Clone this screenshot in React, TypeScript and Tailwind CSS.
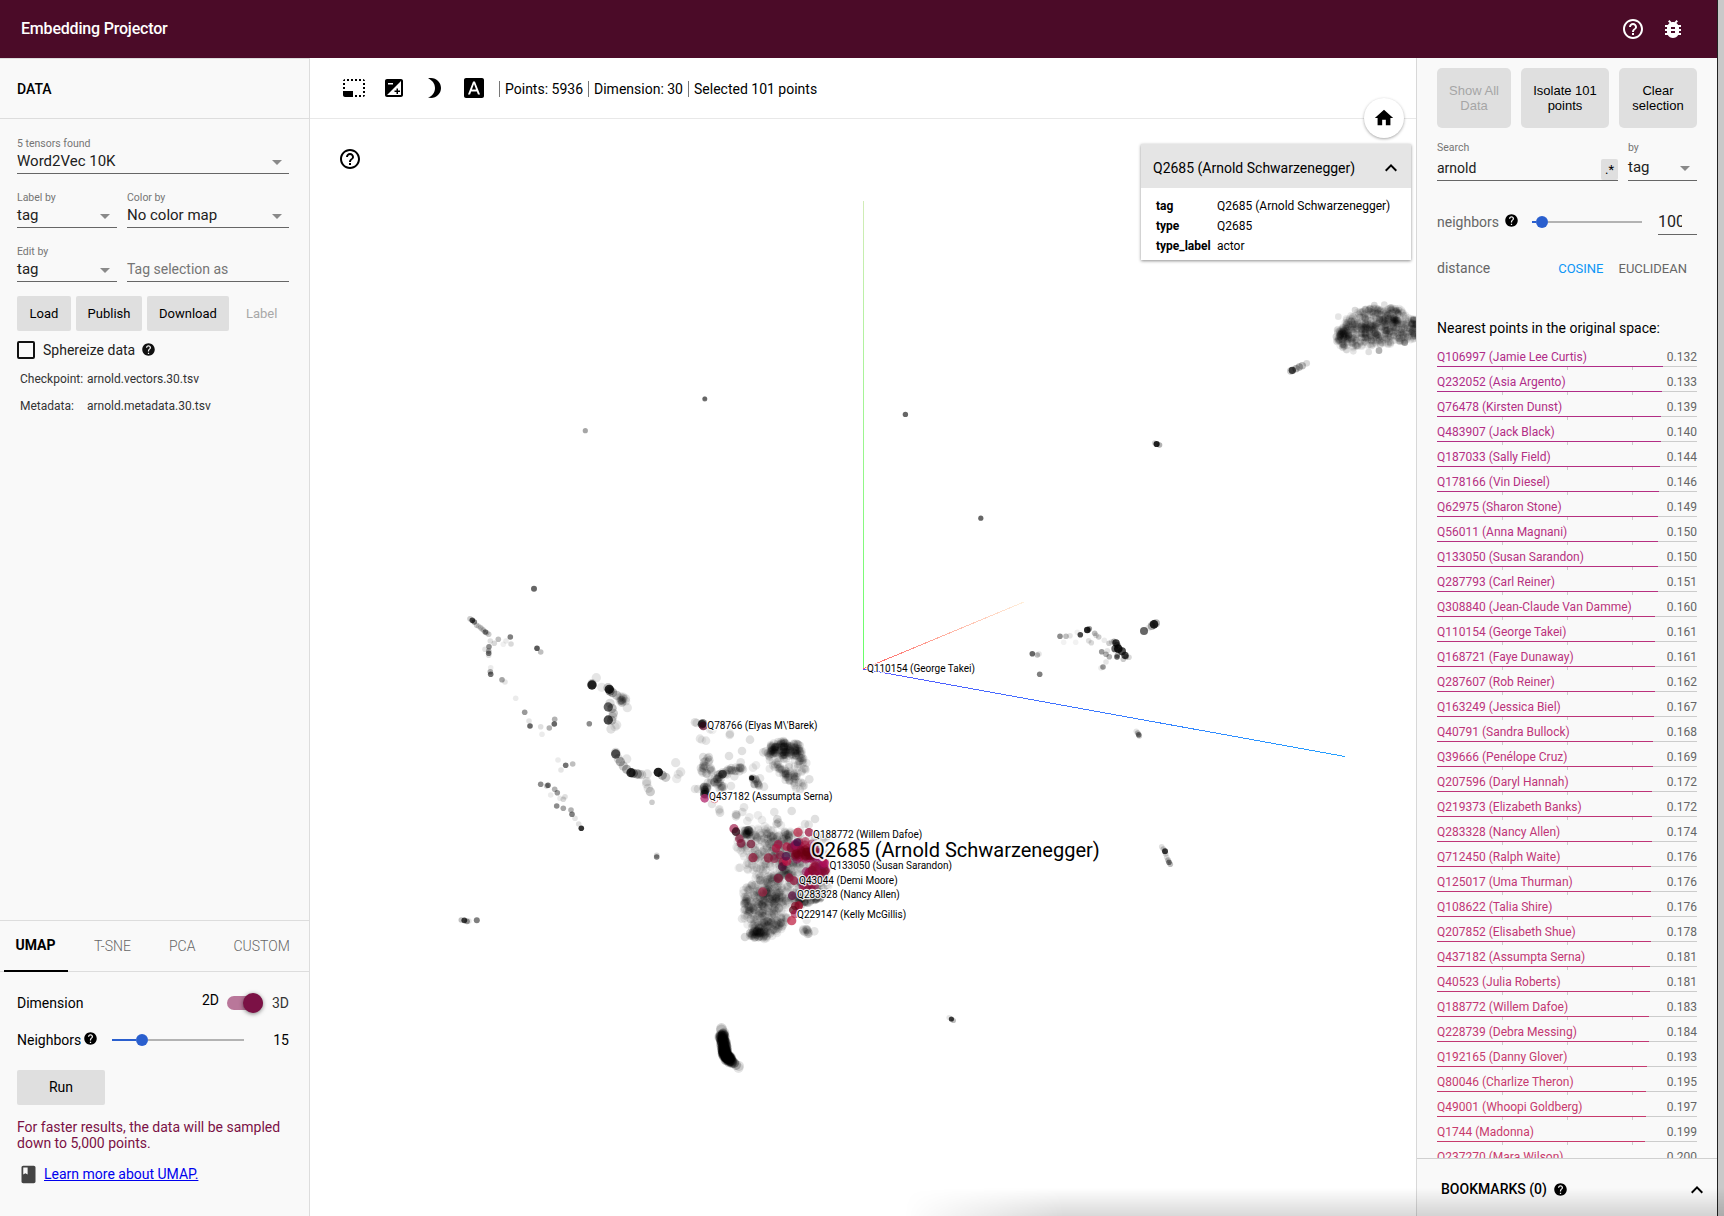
import React from "react";
import {
  MdArrowDropDown,
  MdBook,
  MdBrightness3,
  MdBugReport,
  MdExposure,
  MdFontDownload,
  MdHelp,
  MdHelpOutline,
  MdHome,
  MdKeyboardArrowUp,
  MdPhotoSizeSelectSmall,
} from "react-icons/md";

/* ---------- Scatter plot ---------- */

type Dot = [x: number, y: number, alpha: number, radius?: number, color?: string];
type Pt = [number, number];

function makeRandom(seed: number) {
  let s = seed;
  return () => {
    s = (s + 0x6d2b79f5) | 0;
    let t = Math.imul(s ^ (s >>> 15), 1 | s);
    t = (t + Math.imul(t ^ (t >>> 7), 61 | t)) ^ t;
    return ((t ^ (t >>> 14)) >>> 0) / 4294967296;
  };
}
const rnd = makeRandom(2685);

function inside(x: number, y: number, poly: Pt[]) {
  let hit = false;
  for (let i = 0, j = poly.length - 1; i < poly.length; j = i++) {
    const [xi, yi] = poly[i];
    const [xj, yj] = poly[j];
    if (yi > y !== yj > y && x < ((xj - xi) * (y - yi)) / (yj - yi) + xi) hit = !hit;
  }
  return hit;
}

function fillPoly(poly: Pt[], n: number, alpha: number, r: number, colors?: string[]): Dot[] {
  const xs = poly.map((p) => p[0]);
  const ys = poly.map((p) => p[1]);
  const x0 = Math.min(...xs), x1 = Math.max(...xs), y0 = Math.min(...ys), y1 = Math.max(...ys);
  const out: Dot[] = [];
  while (out.length < n) {
    const x = x0 + rnd() * (x1 - x0);
    const y = y0 + rnd() * (y1 - y0);
    if (inside(x, y, poly)) out.push([x, y, alpha, r, colors ? colors[Math.floor(rnd() * colors.length)] : undefined]);
  }
  return out;
}

function blob(cx: number, cy: number, rx: number, ry: number, n: number, alpha: number, r: number): Dot[] {
  return Array.from({ length: n }, () => {
    const a = rnd() * Math.PI * 2;
    const d = Math.sqrt(rnd());
    return [cx + Math.cos(a) * d * rx, cy + Math.sin(a) * d * ry, alpha, r] as Dot;
  });
}

function strand(points: Pt[], n: number, jitter: number, alpha: number, r: number): Dot[] {
  return Array.from({ length: n }, () => {
    const t = rnd() * (points.length - 1);
    const i = Math.min(Math.floor(t), points.length - 2);
    const f = t - i;
    return [
      points[i][0] + (points[i + 1][0] - points[i][0]) * f + (rnd() - 0.5) * 2 * jitter,
      points[i][1] + (points[i + 1][1] - points[i][1]) * f + (rnd() - 0.5) * 2 * jitter,
      alpha,
      r,
    ] as Dot;
  });
}

// Clusters are stored in thirds of a pixel, relative to the corner of their region.
function place(ox: number, oy: number, defaultRadius: number, dots: Dot[]): Dot[] {
  return dots.map(([x, y, a, r, c]) => [ox + x / 3, oy + y / 3, a, (r ?? defaultRadius) / 3, c]);
}

const westSmall: Dot[] = [
  [252, 26, 0.6, 9], [60, 116, 0.2], [67, 121, 0.7], [73, 126, 0.5], [80, 136, 0.2], [92, 143, 0.2], [100, 150, 0.2],
  [86, 139, 0.15], [96, 147, 0.12], [110, 158, 0.2],
  [106, 156, 0.5], [116, 163, 0.2], [121, 183, 0.12], [133, 190, 0.15], [145, 178, 0.25], [160, 193, 0.06],
  [168, 183, 0.08], [181, 171, 0.5], [183, 192, 0.15], [117, 200, 0.45], [105, 208, 0.1], [116, 213, 0.3],
  [116, 220, 0.5], [116, 226, 0.12], [122, 263, 0.08], [121, 275, 0.3], [122, 283, 0.55], [156, 299, 0.35], [165, 306, 0.1],
  [197, 355, 0.08], [261, 205, 0.65], [272, 216, 0.25], [224, 397, 0.4], [237, 423, 0.1], [240, 438, 0.6],
  [272, 440, 0.12], [298, 444, 0.3], [314, 418, 0.3], [313, 432, 0.6], [276, 463, 0.08], [418, 431, 0.45],
  [324, 540, 0.08], [333, 570, 0.1], [347, 556, 0.55], [368, 552, 0.25], [272, 613, 0.45], [294, 616, 0.55],
  [290, 618, 0.2], [314, 628, 0.3], [322, 638, 0.4], [302, 645, 0.08], [345, 650, 0.12], [340, 658, 0.15],
  [330, 655, 0.08], [320, 678, 0.45], [340, 685, 0.35], [363, 690, 0.3], [366, 703, 0.5], [375, 715, 0.1],
  [386, 732, 0.12], [394, 745, 0.8], [606, 667, 0.2], [620, 831, 0.5], [620, 826, 0.15],
];

const westLarge: Dot[] = [
  [439, 293, 0.1], [426, 315, 0.85], [426, 311, 0.2], [455, 322, 0.08], [478, 328, 0.8], [480, 333, 0.4],
  [488, 338, 0.3], [474, 323, 0.2], [500, 346, 0.2], ...blob(515, 360, 17, 13, 15, 0.1, 13), [532, 383, 0.1],
  [475, 381, 0.6], [480, 370, 0.15], [486, 385, 0.25], [490, 400, 0.2], [488, 410, 0.15], [475, 420, 0.7],
  [485, 421, 0.2], [500, 435, 0.1], [495, 440, 0.08], [483, 447, 0.12], [497, 522, 0.65], [497, 517, 0.15],
  [511, 545, 0.3], [505, 536, 0.15], [530, 537, 0.1], [520, 558, 0.2], [530, 568, 0.3], [543, 578, 0.8], [550, 580, 0.4],
  [562, 582, 0.35], [568, 583, 0.15], [575, 584, 0.15], [592, 582, 0.1], [590, 605, 0.12], [590, 612, 0.1], [595, 625, 0.1],
  [601, 635, 0.2], [625, 577, 0.88], [637, 586, 0.3], [647, 592, 0.2], [677, 548, 0.1], [692, 576, 0.1],
  [685, 583, 0.08], [680, 596, 0.08],
];

const maroons = ["#b00f3f", "#8f0f3f", "#9d0a32", "#7c0a2c", "#a1104f", "#8a1055"];

const core: Dot[] = [
  // upper archipelago
  [45, 97, 0.12], [50, 99, 0.1], [66, 103, 0.7], [70, 108, 0.7, 13, "#5c0a2a"], [68, 100, 0.5], [90, 118, 0.08],
  [97, 120, 0.06], [60, 146, 0.1], [66, 150, 0.06], [78, 152, 0.1], [150, 131, 0.1], [149, 135, 0.1],
  [210, 149, 0.12], [186, 183, 0.12], [147, 198, 0.12], [182, 217, 0.1], [228, 226, 0.08], [219, 233, 0.08],
  ...blob(76, 208, 14, 12, 7, 0.12, 13), ...blob(78, 238, 18, 15, 14, 0.12, 13),
  ...strand([[85, 278], [112, 272], [130, 250], [165, 240], [195, 236]], 36, 8, 0.12, 13),
  [128, 252, 0.5], [126, 254, 0.3], ...blob(118, 288, 14, 10, 8, 0.12, 13), [103, 276, 0.2],
  ...blob(76, 300, 6, 18, 15, 0.16, 13), [73, 312, 0.5], [74, 300, 0.3], [74, 325, 0.75, 13, "#b0246b"],
  [45, 297, 0.1], [54, 297, 0.1], [96, 342, 0.1], [153, 288, 0.1], [163, 259, 0.1], [215, 264, 0.85, 8],
  ...strand([[222, 266], [236, 292]], 11, 6, 0.14, 12), [252, 290, 0.1], [240, 265, 0.1],
  // dome
  ...blob(315, 174, 48, 22, 80, 0.1, 12), ...blob(300, 178, 36, 11, 26, 0.1, 12), ...blob(345, 180, 16, 12, 12, 0.1, 12),
  ...fillPoly([[262, 185], [372, 180], [384, 235], [340, 262], [300, 252], [265, 242]], 110, 0.085, 12),
  ...fillPoly([[300, 250], [350, 245], [355, 265], [382, 292], [355, 302], [318, 280]], 28, 0.1, 12),
  [250, 187, 0.12], [257, 184, 0.12], [388, 268, 0.12],
  // stragglers above the main body
  [118, 358, 0.1], [120, 368, 0.12], [118, 362, 0.06], [168, 373, 0.12], [168, 379, 0.12], [170, 375, 0.1],
  [192, 352, 0.1], [187, 366, 0.1], [208, 382, 0.08], [234, 376, 0.08], [202, 393, 0.08], [246, 390, 0.08],
  [283, 366, 0.1], [335, 363, 0.12], [405, 387, 0.12], [292, 388, 0.15], [295, 398, 0.15], [290, 402, 0.15],
  [375, 402, 0.1], [386, 404, 0.1], [180, 533, 0.08], [176, 534, 0.06],
  // main body
  ...fillPoly([[172, 425], [225, 412], [290, 400], [330, 412], [345, 450], [340, 560], [250, 575], [215, 565], [188, 505], [168, 480]], 240, 0.075, 13),
  ...fillPoly([[240, 420], [330, 415], [440, 440], [450, 560], [330, 560], [265, 490]], 130, 0.09, 13),
  ...fillPoly([[188, 600], [235, 572], [330, 545], [445, 575], [445, 610], [365, 645], [310, 655], [300, 715], [240, 740], [195, 700]], 400, 0.075, 13),
  ...fillPoly([[195, 610], [300, 590], [320, 640], [290, 680], [200, 670]], 80, 0.08, 13),
  ...fillPoly([[205, 735], [225, 695], [330, 680], [300, 725], [255, 748]], 60, 0.08, 13),
  ...blob(235, 733, 28, 11, 34, 0.11, 13), ...blob(360, 632, 30, 12, 14, 0.1, 13),
  ...strand([[370, 640], [440, 618]], 18, 5, 0.14, 11), ...strand([[340, 575], [430, 560]], 24, 9, 0.16, 12),
  ...blob(202, 428, 10, 9, 18, 0.14, 13), ...blob(378, 726, 10, 9, 8, 0.12, 13), [403, 724, 0.1], [370, 718, 0.1],
  [380, 690, 0.08], [195, 741, 0.15], [186, 686, 0.1], [193, 641, 0.1],
  // selected neighbours
  [162, 416, 0.7, 14, "#a3204f"], [168, 425, 0.8, 13, "#300815"], [178, 446, 0.6, 13, "#8a1038"],
  [183, 460, 0.7, 13, "#7f1236"], [213, 462, 0.75, 13, "#741734"], [219, 503, 0.75, 14, "#8d1838"],
  [265, 504, 0.7, 14, "#8d1838"], [283, 506, 0.6, 13, "#8a1038"], [295, 463, 0.7, 13, "#9f1040"],
  [288, 475, 0.75, 13, "#ab1440"], [248, 606, 0.7, 14, "#a02444"], [295, 565, 0.7, 14, "#7d1434"],
  [328, 563, 0.75, 13, "#8b1237"], [342, 572, 0.75, 13, "#961b42"], [354, 427, 0.75, 14, "#c2304f"],
  [387, 427, 0.75, 13, "#98123c"], [337, 617, 0.75, 13, "#5b1440"], [356, 647, 0.85, 13, "#9b0d2a"],
  [346, 648, 0.7, 13, "#7c0a22"], [340, 660, 0.7, 13, "#5c0516"], [345, 672, 0.6, 13, "#a1083c"], [335, 692, 0.75, 14, "#c02647"],
  [310, 515, 0.7, 14, "#a80f3c"], [307, 530, 0.7, 13, "#4a0c34"], [320, 514, 0.7, 14, "#c00f44"],
  [300, 495, 0.6, 13, "#92103c"], [318, 499, 0.7, 13, "#4b1048"], [320, 470, 0.7, 13, "#b0103c"],
  ...fillPoly([[330, 462], [385, 448], [410, 465], [425, 500], [400, 520], [350, 510], [335, 490]], 46, 0.5, 13, maroons),
  ...blob(378, 492, 36, 14, 26, 0.3, 13).map(([x, y, a, r]) => [x, y, a, r, "#6a0012"] as Dot),
  ...fillPoly([[375, 545], [415, 520], [438, 505], [440, 545], [410, 565], [385, 562]], 36, 0.5, 13, maroons),
  ...fillPoly([[360, 588], [418, 588], [418, 592], [360, 591]], 8, 0.5, 11, maroons),
  [352, 457, 0.75, 12, "#3d1048"], [415, 500, 0.7, 13, "#a0106a"], [433, 520, 0.7, 13, "#b00c58"],
];

const eastSmall: Dot[] = [
  [97, 221, 0.6], [112, 225, 0.25], [117, 222, 0.1], [119, 283, 0.5], [180, 169, 0.45], [198, 169, 0.25],
  [210, 167, 0.1], [191, 187, 0.05], [227, 187, 0.05], [241, 164, 0.7], [262, 150, 0.85, 10], [268, 146, 0.4],
  [284, 160, 0.25], [288, 166, 0.15], [296, 171, 0.2], [313, 181, 0.08], [327, 190, 0.2], [335, 186, 0.15],
  [266, 182, 0.12], [274, 188, 0.15], [232, 157, 0.06], [305, 215, 0.4], [318, 223, 0.3], [328, 230, 0.3],
  [322, 212, 0.1], [318, 246, 0.1], [309, 261, 0.4], [303, 264, 0.08], [348, 189, 0.75, 11], [342, 184, 0.3], [352, 196, 0.5, 10],
  [345, 206, 0.6, 11], [355, 206, 0.85, 13], [366, 214, 0.7, 12], [375, 226, 0.7, 11], [378, 230, 0.4], [351, 231, 0.6],
  [352, 226, 0.3], [387, 232, 0.15], [370, 238, 0.2], [409, 454, 0.1], [413, 459, 0.25], [416, 464, 0.5],
  [418, 468, 0.2], [432, 153, 0.6, 12], [446, 144, 0.08, 10], [455, 138, 0.3, 12], [462, 133, 0.85, 13],
  [468, 130, 0.3, 12], [485, 800, 0.12], [490, 807, 0.2], [495, 814, 0.78, 9], [497, 822, 0.15], [500, 832, 0.12],
  [504, 840, 0.25], [507, 847, 0.5], [511, 853, 0.25],
];

const northEast: Dot[] = [
  ...fillPoly([[228, 155], [262, 112], [300, 92], [345, 80], [425, 82], [440, 110], [478, 120], [478, 175], [440, 182], [400, 192], [345, 198], [290, 200], [258, 212], [228, 188]], 620, 0.08, 11),
  ...blob(255, 165, 18, 16, 30, 0.1, 11), ...blob(335, 150, 34, 28, 36, 0.1, 11), ...blob(390, 123, 26, 14, 24, 0.1, 11),
  ...blob(412, 92, 9, 9, 7, 0.12, 10), ...blob(460, 140, 8, 22, 12, 0.12, 10), [235, 110, 0.1], [285, 90, 0.15],
  [343, 75, 0.15], [373, 74, 0.12], [326, 216, 0.12], [357, 212, 0.3], [434, 188, 0.35], [280, 214, 0.1],
  [97, 271, 0.7, 11], [92, 273, 0.2, 11], [108, 266, 0.3, 11], [118, 261, 0.3, 11], [127, 257, 0.25, 11], [140, 250, 0.15, 10],
];

const loose: Dot[] = [
  [464.3, 920.3, 0.75, 2.9], [467, 921.3, 0.4, 2.9], [461.2, 920, 0.25, 2.7], [469, 921, 0.1, 2.7], [476.8, 920.2, 0.5, 3],
  [951.4, 1019, 0.75, 2.6], [949, 1017.5, 0.1, 2.6], [953.4, 1020.5, 0.25, 2.6],
  [704.8, 399, 0.5, 2.5], [704.8, 398.5, 0.2, 2.3], [585.3, 430.7, 0.35, 2.6], [905.4, 414.4, 0.6, 2.7],
  [980.8, 518.2, 0.6, 2.6], [1156.6, 444, 0.85, 3.1], [1159.5, 445, 0.3, 2.8], [1154.5, 442.8, 0.15, 2.6],
  ...strand([[722, 1034], [723, 1041], [724.5, 1048], [725, 1055], [728, 1059]], 170, 2.2, 0.12, 5.2),
  ...strand([[724, 1052], [732, 1062]], 70, 1.8, 0.12, 5.2),
  [721.5, 1028.5, 0.15, 5.4], [721.5, 1030, 0.15, 5.4], [719.5, 1037, 0.1, 5.4], [734, 1063, 0.35, 5], [736, 1065, 0.2, 5],
  [739, 1066, 0.12, 5], [738.5, 1068, 0.1, 5],
];

const allDots: Dot[] = [
  ...place(450, 580, 8.4, westSmall),
  ...place(450, 580, 14, westLarge),
  ...place(680, 690, 13, core),
  ...place(1000, 580, 8.4, eastSmall),
  ...place(1260, 280, 10, northEast),
  ...loose,
];

const plotLabels: [number, number, string, number][] = [
  [867, 671.8, "Q110154 (George Takei)", 10],
  [707.3, 728.8, "Q78766 (Elyas M\\'Barek)", 10],
  [709, 800, "Q437182 (Assumpta Serna)", 10],
  [813, 837.8, "Q188772 (Willem Dafoe)", 10],
  [829.5, 869, "Q133050 (Susan Sarandon)", 10],
  [799, 884, "Q43044 (Demi Moore)", 10],
  [797, 897.8, "Q283328 (Nancy Allen)", 10],
  [797, 918, "Q229147 (Kelly McGillis)", 10],
  [811, 857, "Q2685 (Arnold Schwarzenegger)", 20],
];

function ScatterPlot() {
  return (
    <svg className="block h-full w-full" viewBox="310 119 1106 1097" preserveAspectRatio="xMinYMin slice">
      <defs>
        <linearGradient id="axisX" gradientUnits="userSpaceOnUse" x1="863" y1="669" x2="1025" y2="602">
          <stop offset="0" stopColor="#ff5a5a" />
          <stop offset="0.5" stopColor="#ffb0a0" />
          <stop offset="1" stopColor="#fff0dc" />
        </linearGradient>
        <linearGradient id="axisY" gradientUnits="userSpaceOnUse" x1="863" y1="669" x2="863" y2="201">
          <stop offset="0" stopColor="#66ff66" />
          <stop offset="1" stopColor="#d2ecb8" />
        </linearGradient>
        <linearGradient id="axisZ" gradientUnits="userSpaceOnUse" x1="863" y1="669" x2="1345" y2="756">
          <stop offset="0" stopColor="#5555ff" />
          <stop offset="1" stopColor="#22a0ff" />
        </linearGradient>
      </defs>
      <g fill="none" strokeWidth="1" shapeRendering="crispEdges">
        <path d="M863.5 201V669" stroke="url(#axisY)" />
        <path d="M863 669L1024 602" stroke="url(#axisX)" />
        <path d="M863 669L1345 756.5" stroke="url(#axisZ)" />
      </g>
      {allDots.map(([x, y, a, r, c], i) => (
        <circle key={i} cx={x.toFixed(1)} cy={y.toFixed(1)} r={r!.toFixed(2)} fill={c ?? "#000"} fillOpacity={a} />
      ))}
      <circle cx="714.5" cy="799" r="3.8" fill="#fff" stroke="#e0909c" />
      {plotLabels.map(([x, y, text, size]) => (
        <text
          key={text}
          x={x}
          y={y}
          fontSize={size}
          fill="#000"
          stroke="#fff"
          strokeOpacity="0.85"
          strokeWidth={size > 10 ? 4 : 2.5}
          paintOrder="stroke"
          strokeLinejoin="round"
        >
          {text}
        </text>
      ))}
    </svg>
  );
}

/* ---------- Small controls ---------- */

function Field({ label, value, className }: { label: string; value: string; className: string }) {
  return (
    <div className={`flex h-[38px] flex-col border-b border-[#666] ${className}`}>
      <span className="h-[14px] text-[10.5px] leading-[16px] whitespace-nowrap text-[#757575]">{label}</span>
      <div className="flex h-[23px] items-center justify-between text-[15px] text-[#212121]">
        <span className="mb-px leading-[20px] whitespace-nowrap">{value}</span>
        <MdArrowDropDown className="text-[24px] text-[#8a8a8a]" />
      </div>
    </div>
  );
}

function Slider({ className, fill }: { className: string; fill: string }) {
  return (
    <div className={`flex h-3 items-center ${className}`}>
      <div className={`h-[2px] bg-[#2a5fce] ${fill}`} />
      <div className="size-3 shrink-0 rounded-full bg-[#2a5fce]" />
      <div className="h-[2px] flex-1 bg-[#b3b3b3]" />
    </div>
  );
}

/* ---------- Left panel ---------- */

function DataPanel() {
  return (
    <aside className="flex w-[310px] shrink-0 flex-col border-t border-r border-[#ddd] bg-[#f9f9f9]">
      <div className="flex h-[60px] items-center border-b border-[#ddd] px-[17px] text-[14px] font-medium text-black">
        <span className="mt-[2px]">DATA</span>
      </div>
      <div className="flex flex-1 flex-col pt-[17px] pr-5 pl-[17px]">
        <Field label="5 tensors found" value="Word2Vec 10K" className="w-full" />
        <div className="mt-4 flex gap-[10px]">
          <Field label="Label by" value="tag" className="w-[100px]" />
          <Field label="Color by" value="No color map" className="flex-1" />
        </div>
        <div className="mt-4 flex gap-[10px]">
          <Field label="Edit by" value="tag" className="w-[100px]" />
          <div className="flex flex-1 items-end border-b border-[#666] pb-[2px] text-[14px] leading-[20px] text-[#757575]">
            Tag selection as
          </div>
        </div>
        <div className="mt-[14px] flex h-[35px] gap-[5px] text-[13px] text-black">
          <button className="w-[54px] rounded-[2px] bg-[#dfdfdf]">Load</button>
          <button className="w-[66px] rounded-[2px] bg-[#dfdfdf]">Publish</button>
          <button className="w-[82px] rounded-[2px] bg-[#dfdfdf]">Download</button>
          <button className="w-[55px] pl-[10px] text-left text-[#a8a8a8]">
            <span className="pl-[2px]">Label</span>
          </button>
        </div>
        <div className="mt-[10px] flex h-[18px] items-center text-[14px] text-[#212121]">
          <span className="size-[18px] rounded-[2px] border-2 border-[#111]" />
          <span className="ml-2">Sphereize data</span>
          <MdHelp className="mb-px ml-[6px] text-[15px] text-[#111]" />
        </div>
        <div className="mt-[7px] grid grid-cols-[67px_1fr] pl-[3px] text-[12px] leading-[27px] text-[#333]">
          <span className="whitespace-nowrap">Checkpoint:</span>
          <span>arnold.vectors.30.tsv</span>
          <span>Metadata:</span>
          <span>arnold.metadata.30.tsv</span>
        </div>
      </div>
      <div className="h-[296px] shrink-0 border-t border-[#ddd]">
        <div className="flex h-[51px] items-center border-b border-[#ddd] pl-1 text-[14px] leading-[50px] font-light text-[#666]">
          <div className="mt-px flex h-[51px] w-16 justify-center border-b-2 border-black pr-px text-[14px] leading-[49px] font-bold text-black">UMAP</div>
          <span className="ml-[26px]">T-SNE</span>
          <span className="ml-[38px]">PCA</span>
          <span className="ml-[38px]">CUSTOM</span>
        </div>
        <div className="flex flex-col pr-5 pl-[17px] text-[14px] text-black">
          <div className="mt-[21px] flex h-5 items-center">
            <span>Dimension</span>
            <span className="mb-[6px] ml-auto">2D</span>
            <div className="mr-[9px] ml-2 flex h-[14px] w-[36px] items-center justify-end rounded-full bg-[#b9779a]">
              <div className="size-5 shrink-0 rounded-full bg-[#7b1145] shadow-[0_1px_4px_rgba(0,0,0,0.5)]" />
            </div>
            <span className="text-[#333]">3D</span>
          </div>
          <div className="mt-[17px] flex h-5 items-center">
            <span>Neighbors</span>
            <MdHelp className="mb-[3px] ml-[2px] w-[15px] text-[15px]" />
            <Slider className="ml-[14px] w-[132px]" fill="w-6" />
            <span className="ml-auto">15</span>
          </div>
          <button className="mt-5 h-[35px] w-[88px] rounded-[2px] bg-[#dfdfdf] text-[14px]">Run</button>
          <p className="mt-[14px] leading-4 whitespace-nowrap text-[#7b1145]">
            For faster results, the data will be sampled
            <br />
            down to 5,000 points.
          </p>
          <div className="mt-[13px] flex items-center">
            <MdBook className="ml-px text-[21px] text-[#444]" />
            <a className="ml-[5px] text-[#0000ee] underline">Learn more about UMAP.</a>
          </div>
        </div>
      </div>
    </aside>
  );
}

/* ---------- Centre ---------- */

function Stage() {
  return (
    <main className="flex min-w-0 flex-1 flex-col bg-white">
      <div className="flex h-[61px] shrink-0 items-center border-b border-[#e8e8e8] pl-8 text-black">
        <div className="flex gap-4 text-[24px]">
          <MdPhotoSizeSelectSmall />
          <MdExposure />
          <MdBrightness3 />
          <MdFontDownload />
        </div>
        <div className="mt-px ml-[13px] flex items-center text-[14px] leading-4">
          <span className="border-l border-[#777] pl-[5px]">Points: 5936</span>
          <span className="ml-[5px] border-l border-[#777] pl-[5px]">Dimension: 30</span>
          <span className="ml-[5px] border-l border-[#777] pl-[5px]">Selected 101 points</span>
        </div>
      </div>
      <div className="relative min-h-0 flex-1">
        <ScatterPlot />
        <MdHelpOutline className="absolute top-[28px] left-[28px] text-[24px] text-black" />
        <button className="absolute -top-[21px] left-[1054px] flex size-10 items-center justify-center rounded-full bg-white text-[22px] text-black shadow-[0_1px_3px_rgba(0,0,0,0.35)]">
          <MdHome />
        </button>
        <section className="absolute top-[25px] left-[831px] w-[270px] bg-white pb-1 text-black shadow-[0_1px_3px_rgba(0,0,0,0.45)]">
          <header className="flex h-[44px] items-center justify-between bg-[#e5e5e5] pt-[4px] pr-2 pl-3 text-[14px]">
            <span>Q2685 (Arnold Schwarzenegger)</span>
            <MdKeyboardArrowUp className="text-[24px]" />
          </header>
          <dl className="mt-[8px] grid grid-cols-[61px_1fr] pl-[15px] text-[12px] leading-5">
            <dt className="font-bold">tag</dt>
            <dd>Q2685 (Arnold Schwarzenegger)</dd>
            <dt className="font-bold">type</dt>
            <dd>Q2685</dd>
            <dt className="font-bold">type_label</dt>
            <dd>actor</dd>
          </dl>
        </section>
      </div>
    </main>
  );
}

/* ---------- Right panel ---------- */

const neighbors: [string, string][] = [
  ["Q106997 (Jamie Lee Curtis)", "0.132"],
  ["Q232052 (Asia Argento)", "0.133"],
  ["Q76478 (Kirsten Dunst)", "0.139"],
  ["Q483907 (Jack Black)", "0.140"],
  ["Q187033 (Sally Field)", "0.144"],
  ["Q178166 (Vin Diesel)", "0.146"],
  ["Q62975 (Sharon Stone)", "0.149"],
  ["Q56011 (Anna Magnani)", "0.150"],
  ["Q133050 (Susan Sarandon)", "0.150"],
  ["Q287793 (Carl Reiner)", "0.151"],
  ["Q308840 (Jean-Claude Van Damme)", "0.160"],
  ["Q110154 (George Takei)", "0.161"],
  ["Q168721 (Faye Dunaway)", "0.161"],
  ["Q287607 (Rob Reiner)", "0.162"],
  ["Q163249 (Jessica Biel)", "0.167"],
  ["Q40791 (Sandra Bullock)", "0.168"],
  ["Q39666 (Penélope Cruz)", "0.169"],
  ["Q207596 (Daryl Hannah)", "0.172"],
  ["Q219373 (Elizabeth Banks)", "0.172"],
  ["Q283328 (Nancy Allen)", "0.174"],
  ["Q712450 (Ralph Waite)", "0.176"],
  ["Q125017 (Uma Thurman)", "0.176"],
  ["Q108622 (Talia Shire)", "0.176"],
  ["Q207852 (Elisabeth Shue)", "0.178"],
  ["Q437182 (Assumpta Serna)", "0.181"],
  ["Q40523 (Julia Roberts)", "0.181"],
  ["Q188772 (Willem Dafoe)", "0.183"],
  ["Q228739 (Debra Messing)", "0.184"],
  ["Q192165 (Danny Glover)", "0.193"],
  ["Q80046 (Charlize Theron)", "0.195"],
  ["Q49001 (Whoopi Goldberg)", "0.197"],
  ["Q1744 (Madonna)", "0.199"],
  ["Q237270 (Mara Wilson)", "0.200"],
];

function neighborColor(distance: number) {
  const t = (distance - 0.132) / 0.068;
  const mix = (a: number, b: number) => Math.round(a + (b - a) * t);
  return `rgb(${mix(176, 200)}, ${mix(44, 58)}, ${mix(136, 108)})`;
}

function NeighborRow({ name, value }: { name: string; value: string }) {
  const d = Number(value);
  const color = neighborColor(d);
  return (
    <div className="flex h-[25px] shrink-0 flex-col text-[12px]">
      <div className="flex h-[21px] items-center justify-between pt-[4px] leading-[17px]">
        <span className="whitespace-nowrap" style={{ color }}>{name}</span>
        <span className="text-[#666]">{value}</span>
      </div>
      <div className="h-px bg-[#ccc]">
        <div className="h-px" style={{ width: `${(1 - d) * 100}%`, backgroundColor: color }} />
      </div>
      <div className="flex h-[3px] gap-[64px] pl-[65px]">
        <i className="w-px bg-[#ccc]" />
        <i className="w-px bg-[#ccc]" />
        <i className="w-px bg-[#ccc]" />
      </div>
    </div>
  );
}

function Inspector() {
  return (
    <aside className="flex w-[301px] shrink-0 flex-col border-l border-[#d8d8d8] bg-[#f9f9f9]">
      <div className="flex min-h-0 flex-1 flex-col overflow-hidden px-5 pt-[10px]">
        <div className="flex h-[60px] shrink-0 gap-[10px] font-['Liberation_Sans',Arial,sans-serif] text-[13px] leading-[15px] text-black">
          <button className="w-[74px] rounded-[5px] bg-[#dfdfdf] px-2 text-[#a6a6a6]">Show All Data</button>
          <button className="w-[88px] rounded-[5px] bg-[#dfdfdf] px-2">Isolate 101 points</button>
          <button className="w-[78px] rounded-[5px] bg-[#dfdfdf] px-2">Clear selection</button>
        </div>
        <div className="mt-[12px] flex shrink-0 gap-[10px]">
          <div className="flex w-[181px] flex-col border-b border-[#666]">
            <span className="h-[14px] text-[10.5px] leading-[16px] text-[#757575]">Search</span>
            <div className="mt-[5px] flex h-[21px] items-center justify-between text-[14px] text-[#212121]">
              <span className="pb-[3px]">arnold</span>
              <span className="flex h-[21px] w-[17px] items-center justify-center rounded-[2px] bg-[#dfdfdf] text-[13px] text-black">.*</span>
            </div>
          </div>
          <div className="flex w-[69px] flex-col border-b border-[#666]">
            <span className="h-[14px] text-[10.5px] leading-[16px] text-[#757575]">by</span>
            <div className="mt-[2px] flex h-[24px] items-center justify-between text-[15px] text-[#212121]">
              <span className="pb-px">tag</span>
              <MdArrowDropDown className="text-[24px] text-[#8a8a8a]" />
            </div>
          </div>
        </div>
        <div className="mt-[26px] flex h-[28px] shrink-0 items-center text-[14px] text-[#666]">
          <span className="mt-[3px]">neighbors</span>
          <MdHelp className="mb-px ml-[5px] text-[15px] text-black" />
          <Slider className="mt-[2px] ml-[13px] w-[110px]" fill="w-1" />
          <div className="ml-4 flex h-[28px] w-[39px] items-center border-b border-[#666] pt-[3px] text-[16px] text-[#212121]">
            <span className="w-6 overflow-hidden">100</span>
          </div>
        </div>
        <div className="mt-[23px] flex h-5 shrink-0 items-center pt-px text-[14px] text-[#666]">
          <span>distance</span>
          <span className="ml-auto text-[13px] text-[#0d96f6]">COSINE</span>
          <span className="mr-[10px] ml-[15px] text-[13px]">EUCLIDEAN</span>
        </div>
        <h3 className="mt-[40px] shrink-0 text-[14px] leading-5 whitespace-nowrap text-black">Nearest points in the original space:</h3>
        <div className="mt-[7px] flex flex-col">
          {neighbors.map(([name, value]) => (
            <NeighborRow key={name} name={name} value={value} />
          ))}
        </div>
      </div>
      <div className="flex h-[58px] shrink-0 items-center border-t border-[#d0d0d0] pr-2 pl-6 text-[14px] font-medium text-black">
        <span className="mt-[4px]">BOOKMARKS (0)</span>
        <MdHelp className="mt-[3px] ml-[6px] text-[15px]" />
        <MdKeyboardArrowUp className="mt-[5px] ml-auto text-[24px]" />
      </div>
    </aside>
  );
}

export default function App() {
  return (
    <div className="relative flex h-[1216px] w-[1724px] overflow-hidden bg-[#c9c9c9] font-[Roboto,sans-serif]">
      <div className="flex w-[1717px] shrink-0 flex-col">
        <header className="flex h-[58px] shrink-0 items-center bg-[#4b0b28] pr-8 pl-[21px] text-white">
          <h1 className="text-[16px] font-medium tracking-[-0.012em]">Embedding Projector</h1>
          <MdHelpOutline className="mr-4 ml-auto text-[24px]" />
          <MdBugReport className="text-[24px]" />
        </header>
        <div className="flex min-h-0 flex-1">
          <DataPanel />
          <Stage />
          <Inspector />
        </div>
      </div>
      <div className="w-px bg-[#222]" />
      <div className="pointer-events-none absolute right-0 bottom-0 h-[28px] w-[840px] bg-linear-to-b from-transparent to-black/15 [mask-image:linear-gradient(to_right,transparent_20px,black_180px)]" />
    </div>
  );
}
